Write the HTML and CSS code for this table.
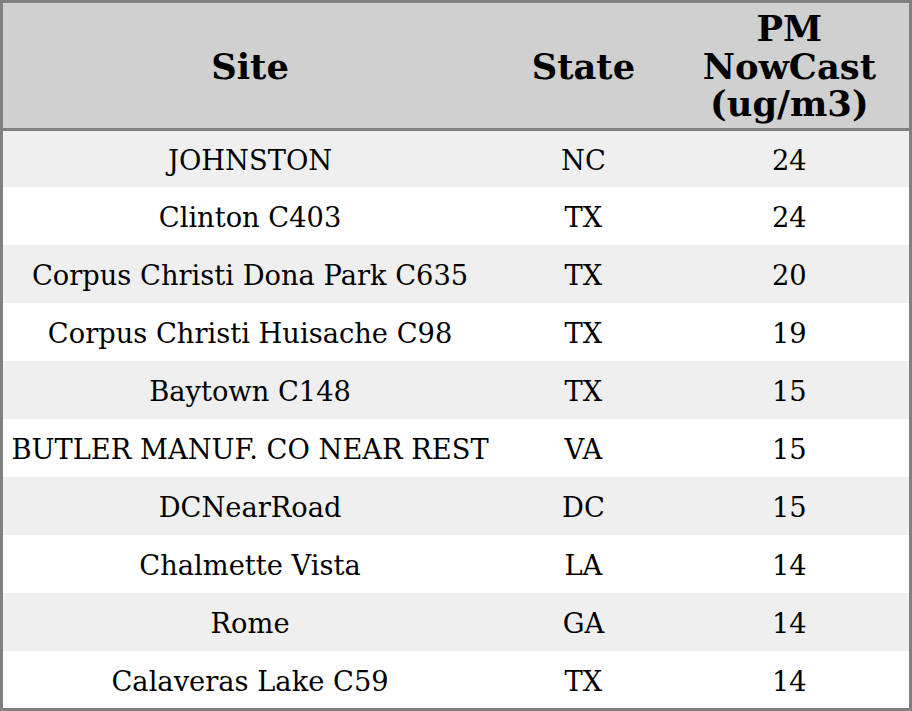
FILE: index.html
```html
<!DOCTYPE html>
<html>
<head>
<meta charset="utf-8">
<link rel="stylesheet" href="styles.css">
</head>
<body>
<table class="data">
  <colgroup>
    <col class="col-site">
    <col class="col-state">
    <col class="col-pm">
  </colgroup>
  <thead>
    <tr class="head-row">
      <th>Site</th>
      <th>State</th>
      <th>PM<br>NowCast<br>(ug/m3)</th>
    </tr>
  </thead>
  <tbody>
    <tr><td>JOHNSTON</td><td>NC</td><td>24</td></tr>
    <tr><td>Clinton C403</td><td>TX</td><td>24</td></tr>
    <tr><td>Corpus Christi Dona Park C635</td><td>TX</td><td>20</td></tr>
    <tr><td>Corpus Christi Huisache C98</td><td>TX</td><td>19</td></tr>
    <tr><td>Baytown C148</td><td>TX</td><td>15</td></tr>
    <tr><td>BUTLER MANUF. CO NEAR REST</td><td>VA</td><td>15</td></tr>
    <tr><td>DCNearRoad</td><td>DC</td><td>15</td></tr>
    <tr><td>Chalmette Vista</td><td>LA</td><td>14</td></tr>
    <tr><td>Rome</td><td>GA</td><td>14</td></tr>
    <tr><td>Calaveras Lake C59</td><td>TX</td><td>14</td></tr>
  </tbody>
</table>
</body>
</html>
```
FILE: styles.css
```css
html, body {
  margin: 0;
  padding: 0;
  background: #ffffff;
}
.data {
  width: 912px;
  height: 711px;
  table-layout: fixed;
  border-collapse: collapse;
  border: 3px solid #808080;
  font-family: "DejaVu Serif", serif;
  color: #000;
}
.col-site { width: 494px; }
.col-state { width: 172px; }
.col-pm { width: 240px; }
.data th {
  background: #d0d0d0;
  font-size: 35.3px;
  font-weight: bold;
  line-height: 37.5px;
  text-align: center;
  vertical-align: middle;
  padding: 7px 0 5px;
  border-bottom: 3px solid #808080;
}
.head-row {
  height: 125px;
}
.data td {
  font-size: 27.3px;
  text-align: center;
  vertical-align: middle;
  padding: 3px 0 0;
  height: 57.7px;
  box-sizing: border-box;
}
.data tbody tr:nth-child(odd) {
  background: #efefef;
}
```
